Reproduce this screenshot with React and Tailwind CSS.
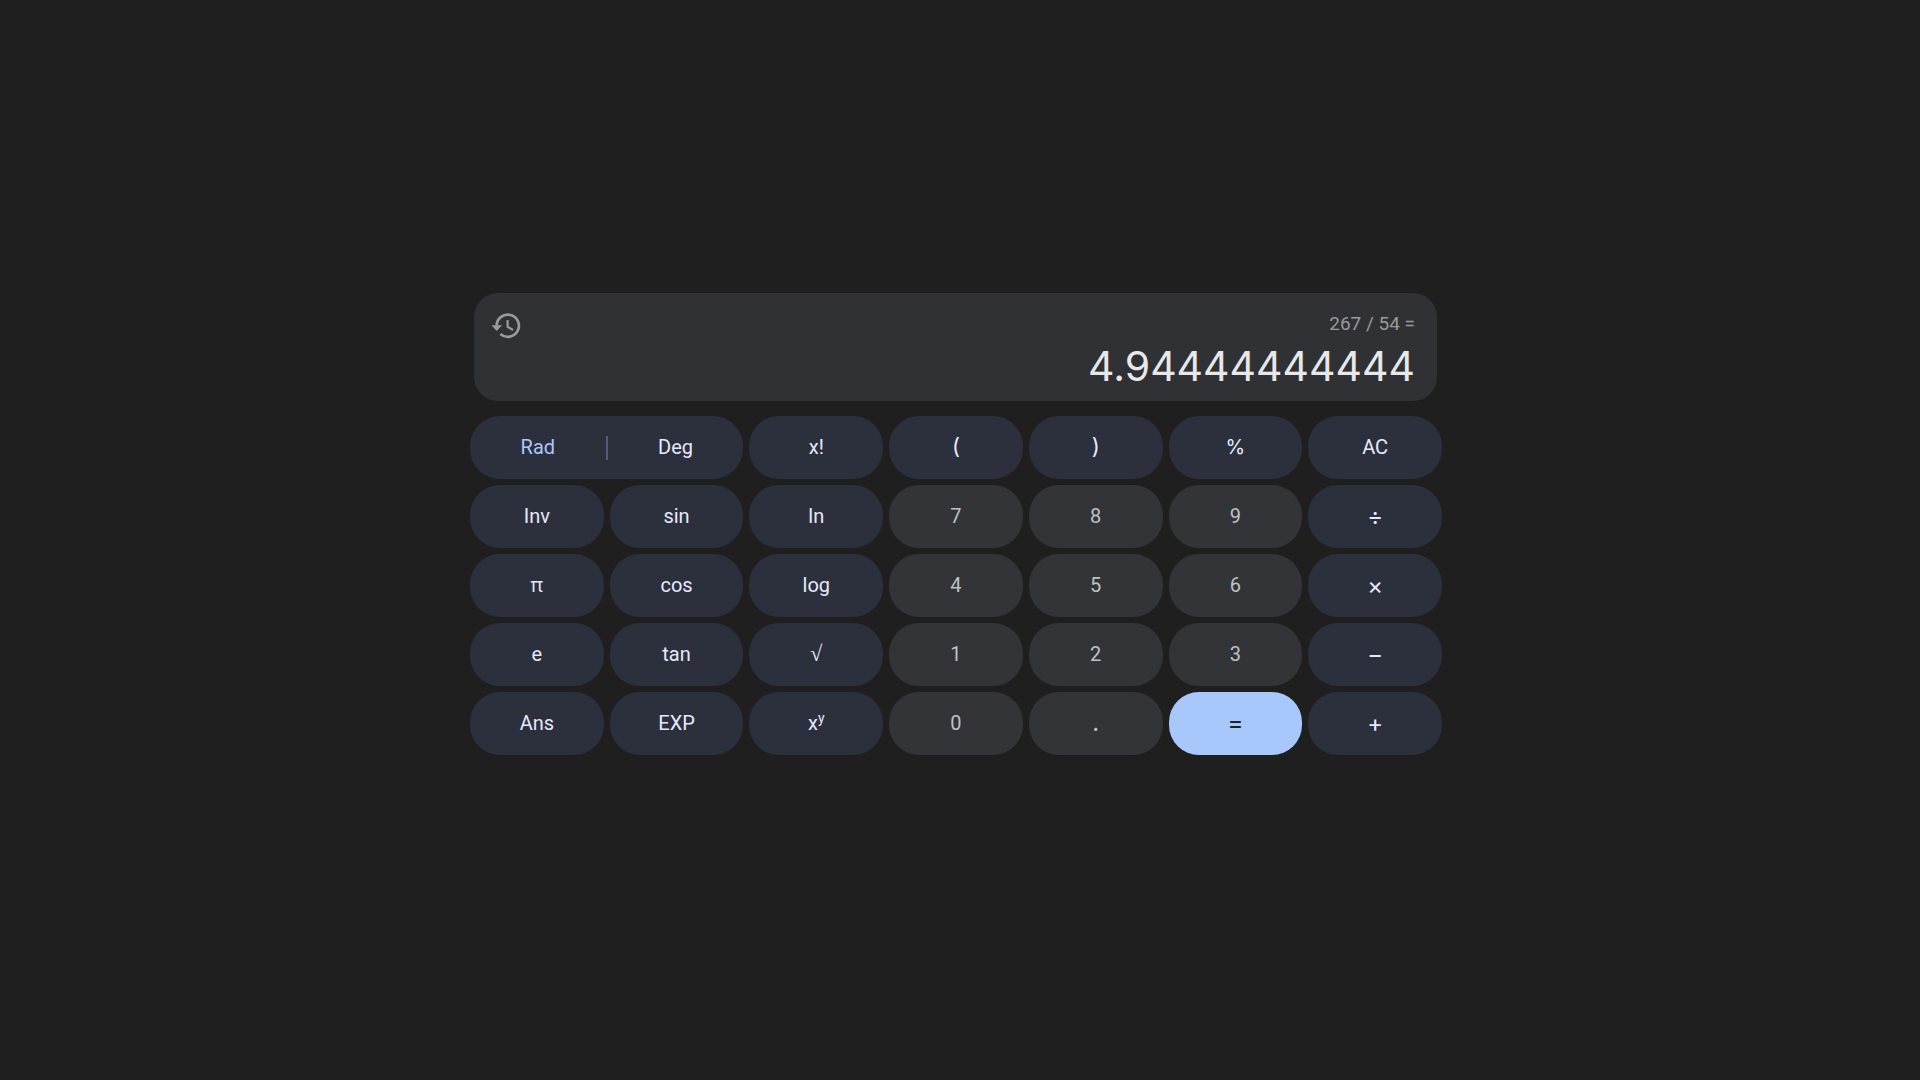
import React from "react";

const TONES = {
  fn: "bg-[#2c303d] text-[#e8e8fb]",
  num: "bg-[#333437] text-[#bdc1c6]",
  eq: "bg-[#a8c7fa] text-[#202124]",
};

const FACES = {
  text: "pb-0.5 text-xl",
  symbol: "pb-0.5 font-[Inter,sans-serif] text-[22px]",
  percent: "pb-0.5 font-[Inter,sans-serif] text-xl",
  op: "font-[Inter,sans-serif] text-2xl",
  equals: "pb-0.5 font-[Inter,sans-serif] text-2xl",
  pi: "pb-0.5 font-['Open_Sans',sans-serif] text-xl",
  root: "pb-0.5 font-['Liberation_Serif',serif] text-[22px]",
};

const KEYS = [
  { label: "x!", name: "factorial" },
  { label: "(", face: "symbol" },
  { label: ")", face: "symbol" },
  { label: "%", face: "percent" },
  { label: "AC" },
  { label: "Inv" },
  { label: "sin" },
  { label: "ln" },
  { label: "7", tone: "num" },
  { label: "8", tone: "num" },
  { label: "9", tone: "num" },
  { label: "÷", face: "op" },
  { label: "π", face: "pi" },
  { label: "cos" },
  { label: "log" },
  { label: "4", tone: "num" },
  { label: "5", tone: "num" },
  { label: "6", tone: "num" },
  { label: "×", face: "op" },
  { label: "e" },
  { label: "tan" },
  { label: "√", face: "root" },
  { label: "1", tone: "num" },
  { label: "2", tone: "num" },
  { label: "3", tone: "num" },
  { label: "−", face: "op" },
  { label: "Ans" },
  { label: "EXP" },
  { label: "x", sup: "y" },
  { label: "0", tone: "num" },
  { label: ".", tone: "num", face: "equals" },
  { label: "=", tone: "eq", face: "equals" },
  { label: "+", face: "op" },
];

function HistoryIcon() {
  return (
    <svg viewBox="0 0 30 26" className="h-[26px] w-[30px]" aria-hidden="true">
      <path
        d="M4.7 12.6A11.1 11.1 0 1 1 8.4 21"
        fill="none"
        stroke="#9b9b9b"
        strokeWidth="2.7"
      />
      <path d="M-0.6 12.2H10L4.7 18Z" fill="#9b9b9b" />
      <path d="M15.6 7V13.8L21 17" fill="none" stroke="#9b9b9b" strokeWidth="2.2" />
    </svg>
  );
}

function Key({ label, name, tone = "fn", face = "text", sup }) {
  return (
    <button
      type="button"
      aria-label={name}
      className={`flex h-[63px] items-center justify-center rounded-[30px] ${TONES[tone]} ${FACES[face]}`}
    >
      <span>
        {label}
        {sup && <sup className="text-sm leading-none">{sup}</sup>}
      </span>
    </button>
  );
}

export default function App() {
  return (
    <main className="flex min-h-screen items-center justify-center bg-[#1f1f1f] pr-2 pb-8 font-[Roboto,sans-serif]">
      <div className="flex w-full max-w-[972px] flex-col gap-[15px]">
        <section className="mr-[5px] ml-1 flex items-start justify-between rounded-3xl bg-[#303134] pt-[19px] pr-[22px] pb-[5px] pl-[18px]">
          <button type="button" aria-label="History" className="pt-px">
            <HistoryIcon />
          </button>
          <div className="flex flex-col items-end">
            <span className="text-[19px] leading-6 text-[#9a9a9a]">267 / 54 =</span>
            <output className="font-[Inter,sans-serif] text-[41px] leading-[60px] text-[#e8e8e8]">
              4.94444444444
            </output>
          </div>
        </section>
        <div className="grid grid-cols-7 gap-1.5">
          <div className="col-span-2 flex h-[63px] items-center rounded-[30px] bg-[#2c303d] text-xl">
            <button type="button" className="h-full flex-1 pb-0.5 text-[#a8c7fa]">
              Rad
            </button>
            <div className="h-6 w-0.5 bg-[#555b76]" />
            <button type="button" className="h-full flex-1 pb-0.5 text-[#e8e8fb]">
              Deg
            </button>
          </div>
          {KEYS.map((key) => (
            <Key key={key.label + (key.sup || "")} {...key} />
          ))}
        </div>
      </div>
    </main>
  );
}
